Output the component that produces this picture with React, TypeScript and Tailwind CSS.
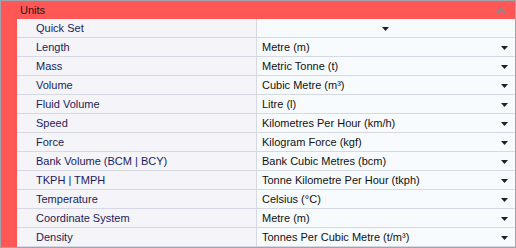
import React from 'react';

const rows: [string, string][] = [
  ['Quick Set', ''],
  ['Length', 'Metre (m)'],
  ['Mass', 'Metric Tonne (t)'],
  ['Volume', 'Cubic Metre (m³)'],
  ['Fluid Volume', 'Litre (l)'],
  ['Speed', 'Kilometres Per Hour (km/h)'],
  ['Force', 'Kilogram Force (kgf)'],
  ['Bank Volume (BCM | BCY)', 'Bank Cubic Metres (bcm)'],
  ['TKPH | TMPH', 'Tonne Kilometre Per Hour (tkph)'],
  ['Temperature', 'Celsius (°C)'],
  ['Coordinate System', 'Metre (m)'],
  ['Density', 'Tonnes Per Cubic Metre (t/m³)'],
];

function Arrow() {
  return (
    <svg width="7" height="4" viewBox="0 0 7 4" className="shrink-0">
      <path d="M0 0H7L3.5 4Z" fill="#1e1e2e" />
    </svg>
  );
}

export default function App() {
  return (
    <div className="w-[516px] h-[248px] overflow-hidden border border-[#a3a3ab] bg-[#ff5656] font-['Liberation_Sans',Arial,sans-serif] text-[11px] leading-none">
      <div className="h-[18px] flex items-center pl-[19px] pr-[9px] pt-px text-[#1a1a1a]">
        <span className="flex-1">Units</span>
        <svg width="10" height="6" viewBox="0 0 10 6">
          <path d="M1 5L5 1L9 5" stroke="#8a8a96" strokeWidth="2" fill="none" />
        </svg>
      </div>
      <div className="ml-[16px]">
        {rows.map(([name, value], i) => (
          <div key={i} className="flex h-[19px] border-b border-[#d6d8e4]">
            <div className="w-[240px] shrink-0 bg-[#f4f4f9] border-r border-[#d6d8e4] pl-[19px] pt-px flex items-center text-[#221c5c]">
              {name}
            </div>
            <div className="flex-1 bg-[#f7fbfe] flex items-center pl-[5px] pr-[7px] pt-px text-[#111]">
              {value ? (
                <>
                  <span className="flex-1">{value}</span>
                  <Arrow />
                </>
              ) : (
                <span className="flex-1 flex justify-center">
                  <Arrow />
                </span>
              )}
            </div>
          </div>
        ))}
      </div>
    </div>
  );
}
